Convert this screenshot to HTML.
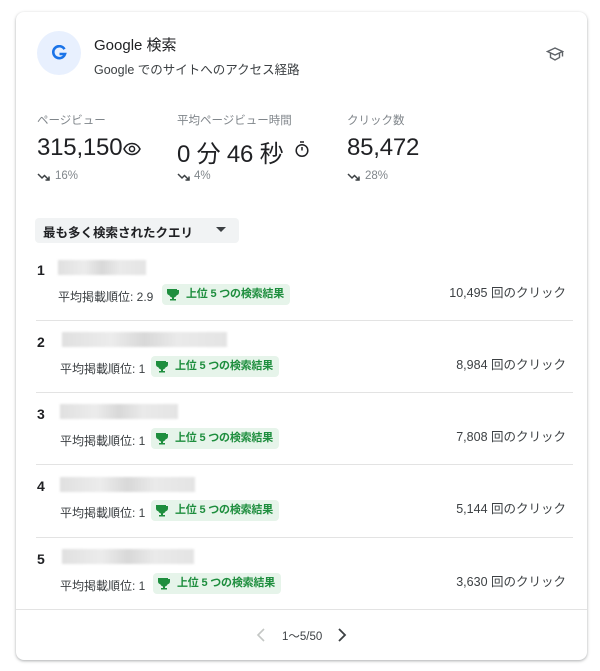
<!DOCTYPE html>
<html><head><meta charset="utf-8"><style>
*{margin:0;padding:0;box-sizing:border-box}
body{width:600px;height:671px;background:#fff;font-family:"Liberation Sans","Noto Sans CJK JP",sans-serif;color:#202124;position:relative;overflow:hidden}
.card{position:absolute;left:16px;top:12px;width:571px;height:648px;border-radius:8px;box-shadow:0 1px 3px rgba(60,64,67,.3),0 1px 2px rgba(60,64,67,.15);background:#fff}
.a{position:absolute;white-space:nowrap}
.lbl{font-size:11.5px;color:#80868b}
.big{font-size:24px;color:#202124;letter-spacing:-0.2px}
.tr{font-size:11.5px;color:#80868b}
.num{font-size:14px;font-weight:bold}
.pos{font-size:12px;color:#3c4043}
.badge{position:absolute;height:21px;background:#e6f4ea;border-radius:4px;color:#1e8e3e;font-size:11px;font-weight:bold;letter-spacing:-0.2px;line-height:21px;padding:0 6px 0 24px;white-space:nowrap}
.clk{font-size:12.5px;color:#3c4043;right:34px}
.sep{position:absolute;left:36px;width:537px;height:1px;background:#e3e3e3}
.blur{position:absolute;height:15px;background:linear-gradient(90deg,#e0e0e0,#ececec 30%,#d8d8d8 50%,#eaeaea 70%,#e4e4e4);filter:blur(1px)}
</style></head><body>
<div class="card"></div>
<div class="a" style="left:37px;top:31px;width:44px;height:44px;border-radius:50%;background:#e8f0fe"></div>
<svg class="a" style="left:51px;top:45px" width="16" height="16" viewBox="0 0 16 16"><path d="M13.5 4.2A6 6 0 1 0 14 9H8.5" fill="none" stroke="#1a73e8" stroke-width="2.6"/></svg>
<div class="a" style="left:94px;top:34px;font-size:15px">Google 検索</div>
<div class="a" style="left:94px;top:59px;font-size:12.5px;color:#3c4043">Google でのサイトへのアクセス経路</div>
<svg class="a" style="left:546px;top:45px" width="18" height="18" viewBox="0 0 18 18" fill="none" stroke="#5f6368" stroke-width="1.4"><path d="M1.5 6.5L9 3l7.5 3.5L9 10z"/><path d="M4.5 8v4.5L9 15l4.5-2.5V8"/><path d="M16.5 6.5v5"/></svg>

<div class="a lbl" style="left:37px;top:112px">ページビュー</div>
<div class="a big" style="left:37px;top:134px">315,150</div>
<svg class="a" style="left:123px;top:142px" width="18" height="14" viewBox="0 0 18 14" fill="none" stroke="#202124" stroke-width="1.5"><path d="M1 7c2-4 5-5.5 8-5.5S15 3 17 7c-2 4-5 5.5-8 5.5S3 11 1 7z"/><circle cx="9" cy="7" r="2.6"/></svg>
<div class="a lbl" style="left:177px;top:112px">平均ページビュー時間</div>
<div class="a big" style="left:177px;top:134px">0 分 46 秒</div>
<svg class="a" style="left:294px;top:140px" width="16" height="18" viewBox="0 0 16 18" fill="none" stroke="#202124" stroke-width="1.5"><circle cx="8" cy="10.5" r="5.8"/><path d="M6 2h4M8 10.5V7"/></svg>
<div class="a lbl" style="left:347px;top:112px">クリック数</div>
<div class="a big" style="left:347px;top:134px">85,472</div>

<svg class="a" style="left:37px;top:172px" width="14" height="10" viewBox="0 0 14 10" fill="none" stroke="#3c4043" stroke-width="1.5"><path d="M1 2l4 4 2.5-2.5L12 8M8.5 8H12V4.5"/></svg>
<div class="a tr" style="left:55px;top:170px">16%</div>
<svg class="a" style="left:177px;top:172px" width="14" height="10" viewBox="0 0 14 10" fill="none" stroke="#3c4043" stroke-width="1.5"><path d="M1 2l4 4 2.5-2.5L12 8M8.5 8H12V4.5"/></svg>
<div class="a tr" style="left:194px;top:170px">4%</div>
<svg class="a" style="left:347px;top:172px" width="14" height="10" viewBox="0 0 14 10" fill="none" stroke="#3c4043" stroke-width="1.5"><path d="M1 2l4 4 2.5-2.5L12 8M8.5 8H12V4.5"/></svg>
<div class="a tr" style="left:365px;top:170px">28%</div>

<div class="a" style="left:35px;top:218px;width:204px;height:25px;background:#f1f3f4;border-radius:4px"></div>
<div class="a" style="left:43px;top:222px;font-size:12.5px;font-weight:bold;color:#202124">最も多く検索されたクエリ</div>
<svg class="a" style="left:216px;top:227px" width="10" height="6" viewBox="0 0 10 6"><path d="M0 0h10L5 5z" fill="#3c4043"/></svg>

<div class="a num" style="left:37px;top:262px">1</div>
<div class="blur" style="left:58px;top:260px;width:88px"></div>
<div class="a pos" style="left:58px;top:288px">平均掲載順位: 2.9</div>
<div class="badge" style="left:162px;top:284px">上位 5 つの検索結果</div>
<div class="a clk" style="top:282px">10,495 回のクリック</div>
<div class="sep" style="top:320px"></div>

<div class="a num" style="left:37px;top:334px">2</div>
<div class="blur" style="left:62px;top:332px;width:165px"></div>
<div class="a pos" style="left:60px;top:360px">平均掲載順位: 1</div>
<div class="badge" style="left:151px;top:356px">上位 5 つの検索結果</div>
<div class="a clk" style="top:354px">8,984 回のクリック</div>
<div class="sep" style="top:392px"></div>

<div class="a num" style="left:37px;top:406px">3</div>
<div class="blur" style="left:60px;top:404px;width:118px"></div>
<div class="a pos" style="left:60px;top:432px">平均掲載順位: 1</div>
<div class="badge" style="left:151px;top:428px">上位 5 つの検索結果</div>
<div class="a clk" style="top:426px">7,808 回のクリック</div>
<div class="sep" style="top:464px"></div>

<div class="a num" style="left:37px;top:478px">4</div>
<div class="blur" style="left:60px;top:477px;width:135px"></div>
<div class="a pos" style="left:60px;top:504px">平均掲載順位: 1</div>
<div class="badge" style="left:151px;top:500px">上位 5 つの検索結果</div>
<div class="a clk" style="top:498px">5,144 回のクリック</div>
<div class="sep" style="top:537px"></div>

<div class="a num" style="left:37px;top:551px">5</div>
<div class="blur" style="left:62px;top:549px;width:132px"></div>
<div class="a pos" style="left:60px;top:577px">平均掲載順位: 1</div>
<div class="badge" style="left:153px;top:573px">上位 5 つの検索結果</div>
<div class="a clk" style="top:571px">3,630 回のクリック</div>
<div class="a" style="left:16px;top:609px;width:571px;height:1px;background:#e3e3e3"></div>

<svg class="a" style="left:256px;top:628px" width="10" height="14" viewBox="0 0 10 14" fill="none" stroke="#c4c7c5" stroke-width="1.6"><path d="M8 1L2 7l6 6"/></svg>
<div class="a" style="left:282px;top:628px;font-size:11.5px;color:#3c4043">1〜5/50</div>
<svg class="a" style="left:337px;top:628px" width="10" height="14" viewBox="0 0 10 14" fill="none" stroke="#3c4043" stroke-width="1.8"><path d="M2 1l6 6-6 6"/></svg>

<svg class="a" style="left:0;top:0" width="600" height="671" viewBox="0 0 600 671" fill="#1e8e3e">
<defs><path id="t" d="M0 0h10v1h2v2.5c0 1.5-1 2.5-2.3 2.7C9 7.5 8 8.3 7 8.5V10h2v1.5H3V10h2V8.5C4 8.3 3 7.5 2.3 6.2 1 6 0 5 0 3.5V1h0z"/></defs>
<use href="#t" x="167" y="289"/><use href="#t" x="156" y="361"/><use href="#t" x="156" y="433"/><use href="#t" x="156" y="505"/><use href="#t" x="158" y="578"/>
</svg>
</body></html>
